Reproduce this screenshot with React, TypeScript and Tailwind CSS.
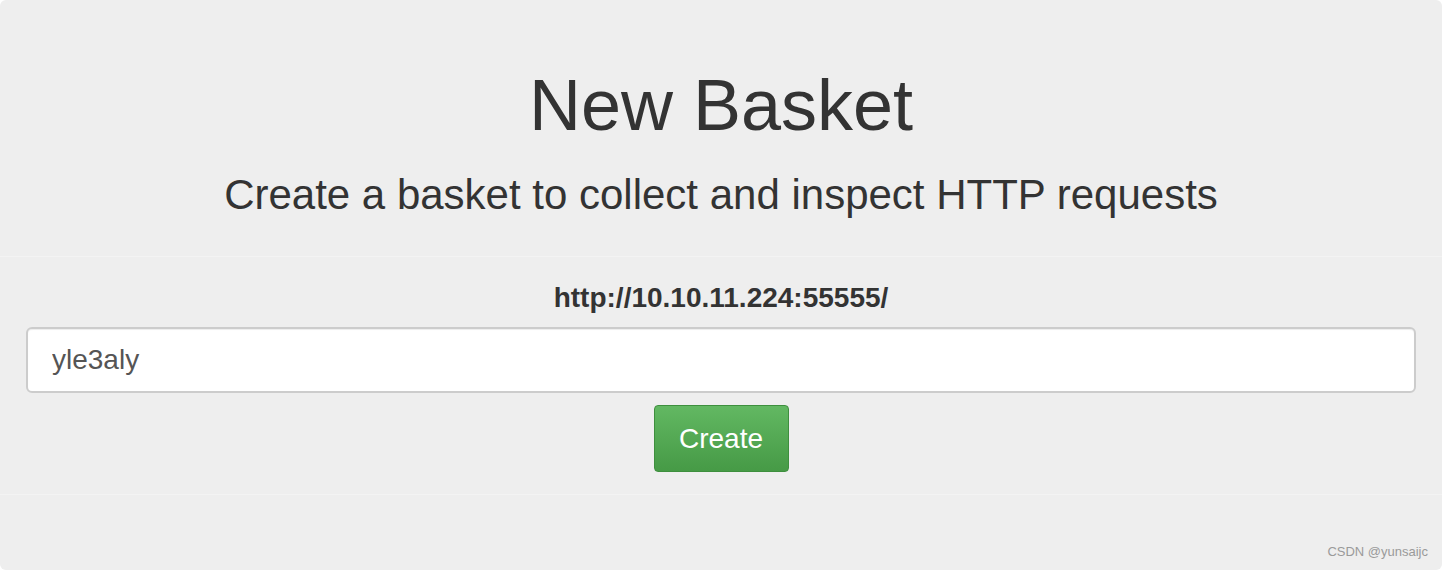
export default function App() {
  return (
    <div className="h-[572px] w-[1444px] bg-white" style={{ fontFamily: '"Liberation Sans", Arial, sans-serif' }}>
      <div className="relative flex h-[570px] w-[1442px] flex-col rounded-[6px] bg-[#eeeeee] text-[#333333]">
        <h1 className="mt-[62px] text-center text-[72px] leading-[86px] font-normal">New Basket</h1>
        <p className="mt-[23px] text-center text-[42px] leading-[48px]">
          Create a basket to collect and inspect HTTP requests
        </p>
        <div className="mt-[37px] flex flex-col items-center border-y border-[#f3f3f3] px-[26px] pb-[22px] pt-[26px]">
          <label className="text-[28px] leading-[30px] font-bold">http://10.10.11.224:55555/</label>
          <input
            defaultValue="yle3aly"
            className="mt-[14px] h-[66px] w-full rounded-[6px] border-2 border-[#cccccc] bg-white px-[24px] text-[28px] text-[#555555] outline-none shadow-[inset_0_1px_1px_rgba(0,0,0,0.075)]"
          />
          <button
            type="button"
            className="mt-[12px] h-[67px] w-[135px] rounded-[4px] border border-[#3e8f3e] bg-gradient-to-b from-[#62b862] to-[#469a46] text-[28px] text-white"
          >
            Create
          </button>
        </div>
        <span className="absolute bottom-[9px] right-[14px] text-[13px] text-[#9a9a9a]">CSDN @yunsaijc</span>
      </div>
    </div>
  );
}
